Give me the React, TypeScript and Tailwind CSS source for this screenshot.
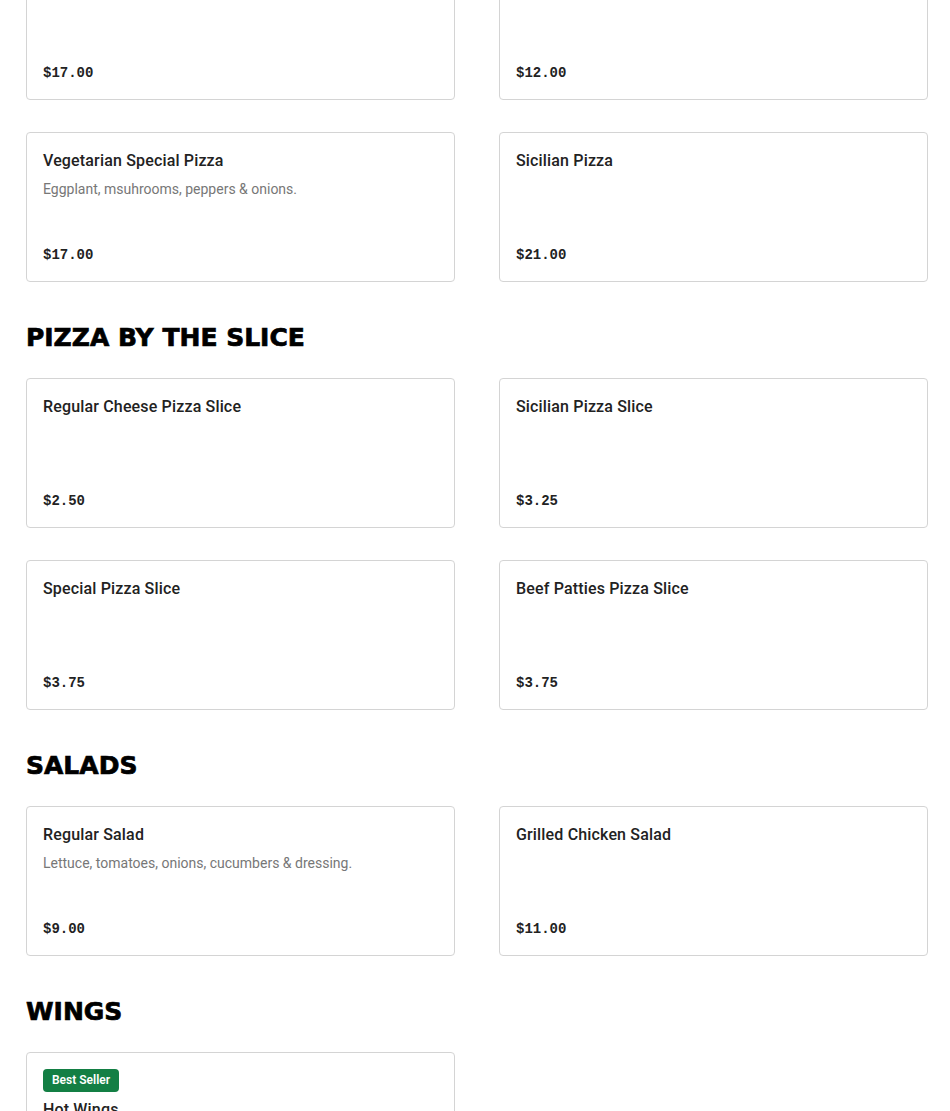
type Item = {
  name: string
  description?: string
  price: string
  badge?: string
}

type Section = {
  title?: string
  items: Item[]
}

// La primera sección arranca cortada arriba (la página viene scrolleada).
const sections: Section[] = [
  {
    items: [
      { name: 'Special Pizza', price: '$17.00' },
      { name: 'Cheese Pizza', price: '$12.00' },
      { name: 'Vegetarian Special Pizza', description: 'Eggplant, msuhrooms, peppers & onions.', price: '$17.00' },
      { name: 'Sicilian Pizza', price: '$21.00' },
    ],
  },
  {
    title: 'PIZZA BY THE SLICE',
    items: [
      { name: 'Regular Cheese Pizza Slice', price: '$2.50' },
      { name: 'Sicilian Pizza Slice', price: '$3.25' },
      { name: 'Special Pizza Slice', price: '$3.75' },
      { name: 'Beef Patties Pizza Slice', price: '$3.75' },
    ],
  },
  {
    title: 'SALADS',
    items: [
      { name: 'Regular Salad', description: 'Lettuce, tomatoes, onions, cucumbers & dressing.', price: '$9.00' },
      { name: 'Grilled Chicken Salad', price: '$11.00' },
    ],
  },
  {
    title: 'WINGS',
    items: [
      { name: 'Hot Wings', description: '10 pieces.', price: '$12.00', badge: 'Best Seller' },
    ],
  },
]

function ItemCard({ item }: { item: Item }) {
  return (
    <div className="flex flex-col justify-between h-[150px] border border-[#d4d4d4] rounded-[4px] bg-white p-4">
      <div>
        {item.badge && (
          <span className="block w-fit mb-[6px] px-[9px] py-[4px] rounded-[4px] bg-[#137f44] text-white text-[12px] leading-[15px] font-semibold">
            {item.badge}
          </span>
        )}
        <p className="text-[16px] leading-6 font-medium tracking-[0.01em] text-[#222]">{item.name}</p>
        {item.description && (
          <p className="mt-[6px] text-[14px] leading-5 text-[#777]">{item.description}</p>
        )}
      </div>
      <p className="text-[14px] leading-5 font-bold text-[#222] font-['Liberation_Mono',monospace]">{item.price}</p>
    </div>
  )
}

export default function App() {
  return (
    <div className="bg-white min-h-screen overflow-hidden font-['Roboto',sans-serif]">
      <div className="w-[902px] ml-[26px] -mt-[50px] flex flex-col">
        {sections.map((section, i) => (
          <section key={i} className={i > 0 ? 'mt-[40px]' : ''}>
            {section.title && (
              <h2 className="mb-[24px] text-[25px] leading-[32px] font-bold text-black [-webkit-text-stroke:0.7px_black] font-['DejaVu_Sans',sans-serif]">
                {section.title}
              </h2>
            )}
            <div className="grid grid-cols-2 gap-x-[44px] gap-y-[32px]">
              {section.items.map(item => (
                <ItemCard key={item.name} item={item} />
              ))}
            </div>
          </section>
        ))}
      </div>
    </div>
  )
}
